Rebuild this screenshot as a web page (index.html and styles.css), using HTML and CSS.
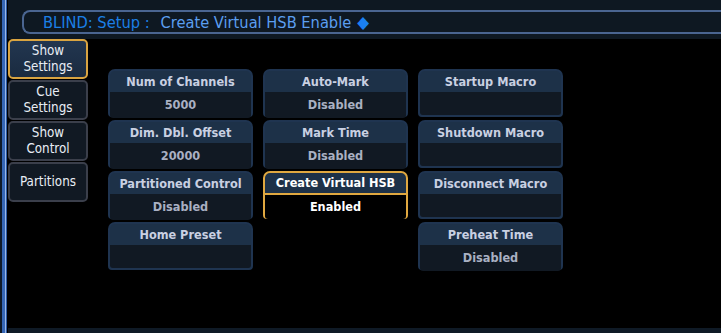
FILE: index.html
```html
<!DOCTYPE html>
<html>
<head>
<meta charset="UTF-8">
<title>BLIND: Setup</title>
<link rel="stylesheet" href="styles.css">
</head>
<body>
<div class="rail"></div>
<div class="main">
  <div class="topbar">
    <div class="cmdline"><span class="mode">BLIND: Setup :</span><span class="cmd">Create Virtual HSB Enable</span><span class="diamond">&#9670;</span></div>
  </div>
  <div class="content">
    <ul class="tabs">
      <li class="on">Show<br>Settings</li>
      <li>Cue<br>Settings</li>
      <li>Show<br>Control</li>
      <li>Partitions</li>
    </ul>
    <div class="grid">
      <div class="card"><div class="lbl">Num of Channels</div><div class="val">5000</div></div>
      <div class="card"><div class="lbl">Auto-Mark</div><div class="val">Disabled</div></div>
      <div class="card"><div class="lbl">Startup Macro</div><div class="val"></div></div>

      <div class="card"><div class="lbl">Dim. Dbl. Offset</div><div class="val">20000</div></div>
      <div class="card"><div class="lbl">Mark Time</div><div class="val">Disabled</div></div>
      <div class="card"><div class="lbl">Shutdown Macro</div><div class="val"></div></div>

      <div class="card"><div class="lbl">Partitioned Control</div><div class="val">Disabled</div></div>
      <div class="card sel"><div class="lbl">Create Virtual HSB</div><div class="val">Enabled</div></div>
      <div class="card"><div class="lbl">Disconnect Macro</div><div class="val"></div></div>

      <div class="card"><div class="lbl">Home Preset</div><div class="val"></div></div>
      <div class="blank"></div>
      <div class="card"><div class="lbl">Preheat Time</div><div class="val">Disabled</div></div>
    </div>
  </div>
  <div class="footer"></div>
</div>
</body>
</html>
```
FILE: styles.css
```css
html, body { margin:0; padding:0; }
body { width:721px; height:333px; overflow:hidden; background:#000; display:flex; font-family:"DejaVu Sans Condensed", "DejaVu Sans", sans-serif; font-stretch:condensed; }

.rail { width:8px; background:linear-gradient(to right, #0f1a28 0 2px, #3566b6 2px 5px, #9ab8e6 5px 6px, #2d5aa4 6px 7px, #000 7px); }

.main { flex:1; display:flex; flex-direction:column; }

.topbar { height:39px; box-sizing:border-box; background:#0e1822; padding:10px 0 0 14px; }
.cmdline { height:24px; box-sizing:border-box; border:2px solid #4a6591; border-right:none; border-radius:8px 0 0 8px; padding-left:19px; font-size:16.3px; line-height:20px; white-space:nowrap; }
.mode { color:#1b7fe6; }
.cmd { color:#5b9ef0; margin-left:11px; }
.diamond { color:#1a80f0; margin-left:6px; font-size:17px; }

.content { flex:1; display:flex; align-items:flex-start; }

.tabs { list-style:none; margin:0; padding:0; width:80px; }
.tabs li { height:40px; box-sizing:border-box; margin-bottom:1px; border:2px solid #3b3f4b; border-radius:5px; background:#111923; color:#e8edf5; font-size:13.3px; line-height:16px; text-align:center; display:flex; align-items:center; justify-content:center; }
.tabs li.on { border-color:#d9a441; background:linear-gradient(#223650, #1a2b40); }

.grid { margin:30px 0 0 20px; display:grid; grid-template-columns:repeat(3, 145px); grid-auto-rows:48px; column-gap:10px; row-gap:3px; }
.card { box-sizing:border-box; border:2px solid #1f3450; border-radius:7px 7px 4px 4px; background:#1d3148; display:flex; flex-direction:column; font-weight:bold; font-size:12.6px; text-align:center; }
.lbl { height:21px; line-height:21px; color:#c9d0e2; }
.val { flex:1; background:#111923; color:#a9b0c2; line-height:26px; border-radius:0 0 3px 3px; }
.card.sel { border-color:#e0a840; }
.card.sel .lbl { color:#fff; height:20px; line-height:20px; border-bottom:2px solid #e0a840; }
.card.sel .val { background:#000; color:#fff; line-height:24px; }

.footer { height:5px; background:#0f1a26; }
```
